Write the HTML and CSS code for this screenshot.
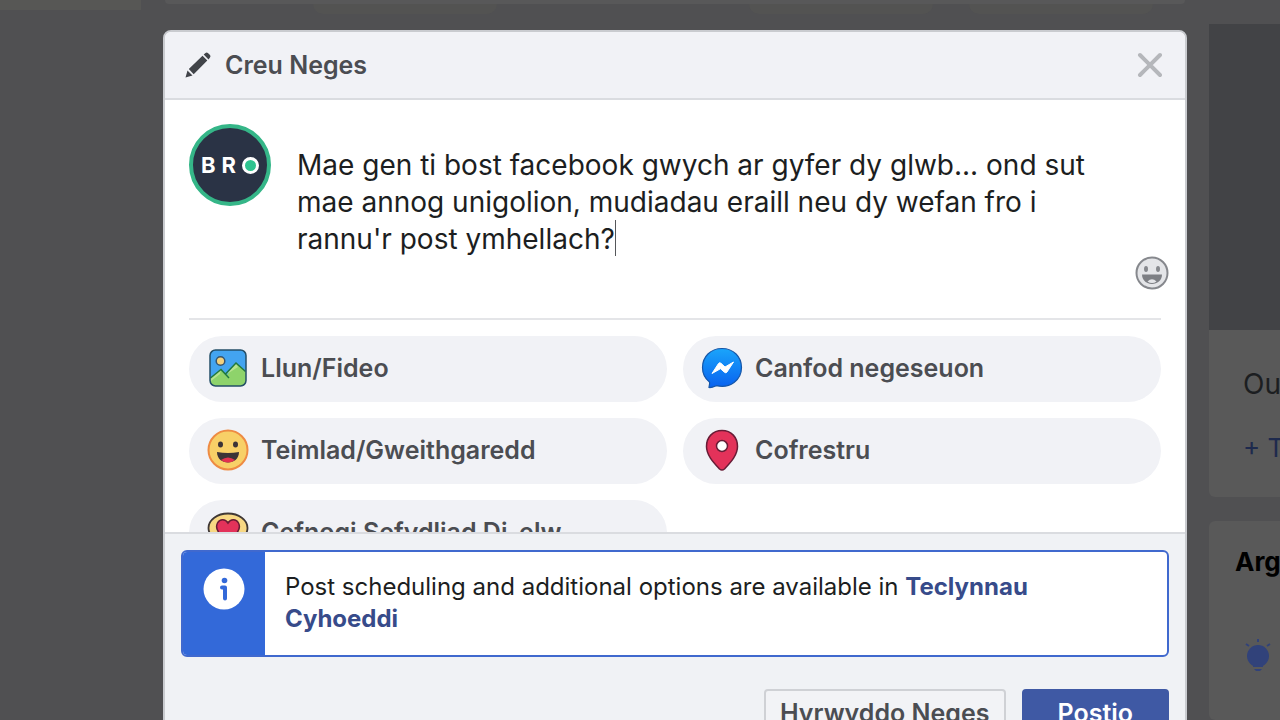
FILE: index.html
```html
<!DOCTYPE html>
<html lang="cy">
<head>
  <meta charset="UTF-8" />
  <title>Creu Neges</title>
  <meta name="viewport" content="width=device-width, initial-scale=1.0" />
  <link rel="stylesheet" href="styles.css">
</head>
<body>
  <div class="page">
    <div class="side-card"></div>
    <main class="feed">
      <div class="feed-card"></div>
      <div class="feed-tabs">
        <span></span>
        <span></span>
        <span></span>
      </div>
    </main>
    <aside class="right">
      <section class="card">
        <div class="cover"></div>
        <div class="card-body">
          <p class="card-title">Ou</p>
          <a href="#" class="card-link">+ T</a>
        </div>
      </section>
      <section class="card tips">
        <h3>Arg</h3>
        <svg class="bulb" width="28" height="36" viewBox="0 0 28 36" fill="#31427a">
          <circle cx="14" cy="19" r="11" />
          <path d="M9 27h10v3H9zM10 32h8l-2 2h-4z" />
          <path d="M14 2v3M2 7l3 2M26 7l-3 2" stroke="#31427a" stroke-width="2" />
        </svg>
      </section>
    </aside>
  </div>

  <div class="overlay">
    <div class="dialog" role="dialog" aria-labelledby="dialog-title">
      <header class="dialog-header">
        <svg width="26" height="26" viewBox="0 0 26 26" fill="#414449">
          <path d="M0.500 25.500L2.500 18.500L7.500 23.500ZM3.800 17L17.500 3.800L22.300 8.600L8.700 22.200ZM18.700 2.600L20.500 1Q21.700 0 22.900 1L25 3.100Q26 4.300 25 5.500L23.500 7.400Z" />
        </svg>
        <h2 id="dialog-title">Creu Neges</h2>
        <button class="close" aria-label="Cau">
          <svg width="26" height="26" viewBox="0 0 26 26" fill="none" stroke="#b5b7bb" stroke-width="4" stroke-linecap="round">
            <path d="M3 3L23 23M23 3L3 23" />
          </svg>
        </button>
      </header>

      <div class="dialog-body">
        <div class="composer">
          <div class="avatar">BR<i></i></div>
          <div class="message">
            <textarea id="message" rows="3" aria-label="Neges">Mae gen ti bost facebook gwych ar gyfer dy glwb... ond sut mae annog unigolion, mudiadau eraill neu dy wefan fro i rannu'r post ymhellach?</textarea>
            <span class="caret"></span>
          </div>
        </div>
        <div class="tools">
          <button class="emoji" aria-label="Emoji">
            <svg width="34" height="34" viewBox="0 0 34 34">
              <circle cx="17" cy="17" r="15.500" fill="#e4e5e8" stroke="#86888d" stroke-width="2" />
              <ellipse cx="11" cy="13" rx="2" ry="3" fill="#86888d" />
              <ellipse cx="23" cy="13" rx="2" ry="3" fill="#86888d" />
              <path d="M7 18.500H27C27 31 7 31 7 18.500Z" fill="#7d7f84" />
              <path d="M12.500 25.500Q17 21 21.500 25.500Q17 28.500 12.500 25.500Z" fill="#e4e5e8" />
            </svg>
          </button>
        </div>

        <div class="options">
          <button class="option">
            <svg width="42" height="42" viewBox="0 0 42 42">
              <rect x="3" y="3" width="36" height="36" rx="5" fill="#43a4f0" />
              <path d="M3 31L14 22L20 28L29 16L39 24V34Q39 39 34 39H8Q3 39 3 34Z" fill="#8ed36b" />
              <path d="M14 22L4 31V34L13 27ZM29 16L20 27L31 20Z" fill="#b8e48f" />
              <path d="M3.500 31L14 22.500L22 31M18.500 27L29 16L38.500 24.500" fill="none" stroke="#21783f" stroke-width="1.500" />
              <circle cx="13.500" cy="14" r="4.300" fill="#f3d17c" stroke="#38546c" stroke-width="1.500" />
              <rect x="3" y="3" width="36" height="36" rx="5.500" fill="none" stroke="#244f68" stroke-width="1.500" />
            </svg>
            Llun/Fideo
          </button>
          <button class="option">
            <svg width="42" height="42" viewBox="0 0 42 42">
              <defs>
                <linearGradient id="chat" x1="0" y1="0" x2="0" y2="1">
                  <stop offset="0" stop-color="#1aa5fb" />
                  <stop offset="1" stop-color="#0861ef" />
                </linearGradient>
              </defs>
              <path d="M21 1.500C9.500 1.500 1.500 9.800 1.500 20.500C1.500 27 4 31.500 8.500 35C9 37 8 39 8 40.500C10.500 41 13.500 39.500 15.500 38.700C29 42 40.500 33 40.500 20.500C40.500 9.800 32.500 1.500 21 1.500Z" fill="url(#chat)" stroke="#1556a8" stroke-width="1.200" />
              <path d="M11 26.500L17.500 16.500Q18.500 15 20 16.300L24 20L32.500 15L26 25Q25 26.500 23.500 25.300L19.500 21.700Z" fill="#fff" stroke="#fff" stroke-linejoin="round" />
            </svg>
            Canfod negeseuon
          </button>
          <button class="option">
            <svg width="42" height="42" viewBox="0 0 42 42">
              <circle cx="21" cy="21" r="19.500" fill="#f8d067" stroke="#ee8b43" stroke-width="2" />
              <ellipse cx="13.500" cy="15.500" rx="2.500" ry="3" fill="#3b3337" />
              <ellipse cx="28.500" cy="15.500" rx="2.500" ry="3" fill="#3b3337" />
              <path d="M10 23Q21 25 32 23C32 37 10 37 10 23Z" fill="#3b3337" />
              <path d="M14 31Q21 26 28 31Q21 36 14 31Z" fill="#e3314f" />
            </svg>
            Teimlad/Gweithgaredd
          </button>
          <button class="option">
            <svg width="42" height="42" viewBox="0 0 42 42">
              <path d="M21 1.500C11.500 1.500 5.500 8.500 5.500 17.500C5.500 26.500 13 34 18.500 40Q21 42 23.500 40C29 34 36.500 26.500 36.500 17.500C36.500 8.500 30.500 1.500 21 1.500Z" fill="#e3325a" stroke="#681c36" stroke-width="1.500" />
              <circle cx="21" cy="17" r="5.500" fill="#fff" stroke="#681c36" stroke-width="1.500" />
            </svg>
            Cofrestru
          </button>
          <button class="option">
            <svg width="42" height="42" viewBox="0 0 42 42">
              <ellipse cx="21" cy="17" rx="19.500" ry="14.500" fill="#f8d883" stroke="#403835" stroke-width="1.800" />
              <path d="M21 29C11 23 8 17 10.500 12C13 7.500 18.500 8 21 12C23.500 8 29 7.500 31.500 12C34 17 31 23 21 29Z" fill="#e3325a" stroke="#681c36" stroke-width="1.500" />
            </svg>
            Cefnogi Sefydliad Di-elw
          </button>
        </div>
      </div>

      <footer class="dialog-footer">
        <div class="notice">
          <div class="notice-icon">
            <svg width="42" height="42" viewBox="0 0 42 42">
              <circle cx="21" cy="21" r="20.500" fill="#fff" />
              <circle cx="21.500" cy="12.500" r="2.800" fill="#3369d9" />
              <path d="M19 19.500H22V30.500" fill="none" stroke="#3369d9" stroke-width="4" stroke-linecap="round" stroke-linejoin="round" />
            </svg>
          </div>
          <p>Post scheduling and additional options are available in <a href="#">Teclynnau Cyhoeddi</a></p>
        </div>
        <div class="actions">
          <button class="btn">Hyrwyddo Neges</button>
          <button class="btn btn-primary">Postio</button>
        </div>
      </footer>
    </div>
  </div>
</body>
</html>
```

FILE: styles.css
```css
* {
  box-sizing: border-box;
}
body {
  font-family: Inter, 'Liberation Sans', sans-serif;
  background: #505052;
  color: #1c1e21;
  height: 100vh;
  margin: 0;
  overflow: hidden;
}
h2, h3, p {
  margin: 0;
}
button {
  font-family: inherit;
  border: none;
  cursor: pointer;
}
svg {
  display: block;
  flex-shrink: 0;
}
a {
  text-decoration: none;
}

/* page behind the dialog */
.page {
  display: grid;
  grid-template-columns: 141px 1fr 71px;
  gap: 24px;
  height: 100vh;
  overflow: hidden;
}
.side-card {
  height: 10px;
  background: #575755;
}
.feed-card {
  height: 4px;
  background: #585859;
  border-radius: 0 0 4px 4px;
}
.feed-tabs {
  display: flex;
  justify-content: flex-end;
  gap: 36px;
  padding-right: 32px;
}
.feed-tabs span {
  width: 184px;
  height: 10px;
  background: #535352;
  border-radius: 0 0 16px 16px;
}
.feed-tabs span:first-child {
  margin-right: auto;
  margin-left: 148px;
}
.right {
  display: flex;
  flex-direction: column;
  gap: 24px;
  padding-top: 24px;
  white-space: nowrap;
}
.card {
  background: #595959;
  border-radius: 6px 0 0 6px;
}
.cover {
  height: 306px;
  background: #424346;
}
.card-body {
  padding: 36px 0 31px 34px;
}
.card-title {
  font-size: 28px;
  line-height: 36px;
  margin-bottom: 28px;
}
.card-link {
  display: block;
  font-size: 26px;
  line-height: 36px;
  color: #1e2a4d;
}
.tips {
  flex: 1;
  padding: 24px 0 0 26px;
}
.tips h3 {
  font-size: 26px;
  line-height: 34px;
  color: #000;
}
.bulb {
  margin: 58px 0 0 9px;
}

/* dialog */
.overlay {
  position: fixed;
  inset: 0;
  padding: 30px 93px 0 163px;
  overflow: hidden;
}
.dialog {
  background: #fff;
  border: 2px solid #c9cbcf;
  border-radius: 8px;
  overflow: hidden;
}
.dialog-header {
  display: flex;
  align-items: center;
  gap: 14px;
  padding: 16px 20px;
  background: #f1f2f6;
  border-bottom: 2px solid #dadce0;
}
.dialog-header h2 {
  flex: 1;
  font-size: 25px;
  line-height: 34px;
  font-weight: 600;
  color: #4b4d52;
}
.close {
  padding: 2px;
  background: none;
}
.dialog-body {
  height: 432px;
  padding: 24px;
  overflow: hidden;
}
.composer {
  display: flex;
  gap: 26px;
}
.avatar {
  display: flex;
  align-items: center;
  justify-content: center;
  flex-shrink: 0;
  width: 82px;
  height: 82px;
  background: #2a3345;
  border: 4px solid #35b688;
  border-radius: 50%;
  color: #fff;
  font-size: 22px;
  font-weight: 700;
  letter-spacing: 6px;
}
.avatar i {
  width: 17px;
  height: 17px;
  background: #2fc490;
  border: 3px solid #fff;
  border-radius: 50%;
}
.message {
  position: relative;
  flex: 1;
}
.message textarea {
  display: block;
  width: 100%;
  padding: 23px 48px 0 0;
  border: none;
  outline: none;
  resize: none;
  overflow: hidden;
  background: none;
  font-family: inherit;
  font-size: 28px;
  line-height: 37px;
  color: #1c1e21;
}
.caret {
  position: absolute;
  left: 318px;
  bottom: 2px;
  width: 1px;
  height: 36px;
  background: #55575a;
}
.tools {
  display: flex;
  justify-content: flex-end;
  margin: -2px -8px 0 0;
  padding-bottom: 28px;
}
.emoji {
  padding: 0;
  background: none;
}
.options {
  display: grid;
  grid-template-columns: 1fr 1fr;
  gap: 16px;
  padding-top: 16px;
  border-top: 2px solid #e4e5e8;
}
.option {
  display: flex;
  align-items: center;
  gap: 12px;
  height: 66px;
  padding: 0 18px 2px;
  background: #f1f2f6;
  border-radius: 33px;
  font-size: 25px;
  font-weight: 600;
  color: #4b4d52;
}
.dialog-footer {
  padding: 16px;
  background: #f0f2f5;
  border-top: 2px solid #dadce0;
}
.notice {
  display: flex;
  background: #fff;
  border: 2px solid #4069ce;
  border-radius: 6px;
  overflow: hidden;
}
.notice-icon {
  flex-shrink: 0;
  width: 82px;
  padding: 16px 20px;
  background: #3369d9;
}
.notice p {
  padding: 19px 64px 20px 20px;
  font-size: 24px;
  line-height: 32px;
}
.notice a {
  font-weight: 700;
  color: #374b8a;
}
.actions {
  display: flex;
  justify-content: flex-end;
  gap: 16px;
  padding-top: 32px;
}
.btn {
  height: 48px;
  padding: 0 14px;
  background: #f2f3f6;
  border: 2px solid #cfd1d5;
  border-radius: 4px;
  font-size: 25px;
  font-weight: 600;
  color: #4b4d52;
}
.btn-primary {
  padding: 0 34px;
  background: #3f59a4;
  border-color: #3f59a4;
  color: #fff;
}
```
